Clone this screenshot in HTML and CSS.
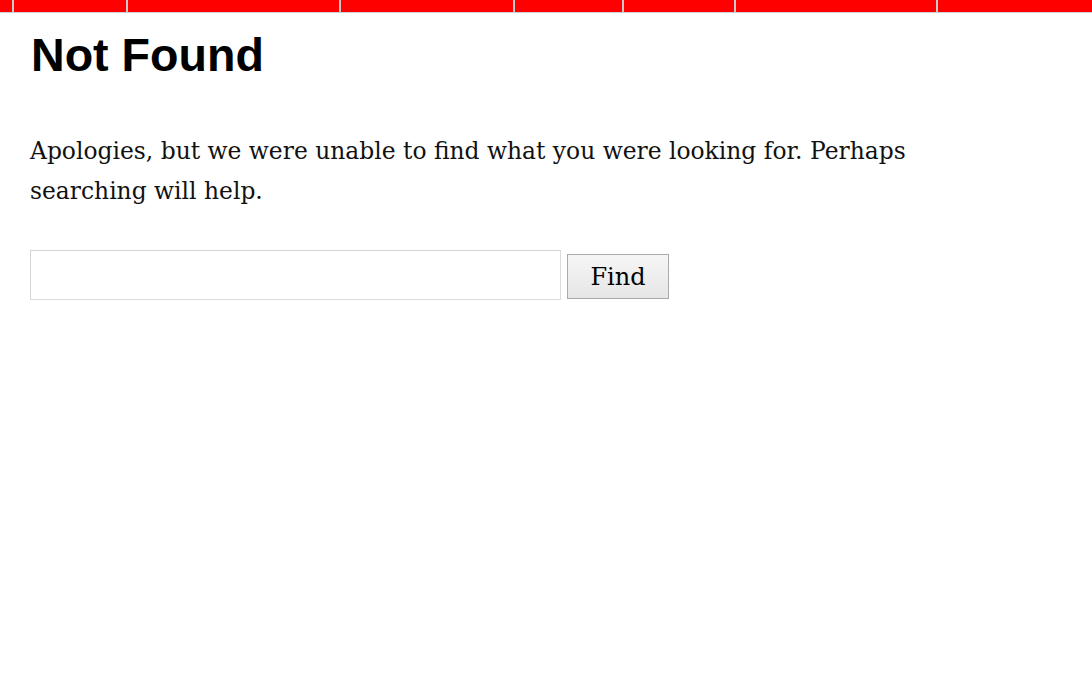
FILE: index.html
```html
<!DOCTYPE html>
<html>
<head>
<meta charset="utf-8">
<title>Not Found</title>
<link rel="stylesheet" href="styles.css">
</head>
<body>
<nav class="topnav">
  <span class="nav-item"></span>
  <span class="nav-item"></span>
  <span class="nav-item"></span>
  <span class="nav-item"></span>
  <span class="nav-item"></span>
  <span class="nav-item"></span>
  <span class="nav-item"></span>
  <span class="nav-item"></span>
</nav>
<main class="content">
  <h1 class="title">Not Found</h1>
  <p class="message">Apologies, but we were unable to find what you were looking for. Perhaps searching will help.</p>
  <form class="search" action="#">
    <input class="search-input" type="text" aria-label="Search">
    <button class="search-btn" type="button">Find</button>
  </form>
</main>
</body>
</html>
```

FILE: styles.css
```css
html, body {
  margin: 0;
  padding: 0;
  background: #fff;
}

.topnav {
  display: grid;
  grid-template-columns: 12px 112px 211px 172px 107px 110px 200px 1fr;
  column-gap: 2px;
  height: 12px;
  background: #c8c8c8;
  border-bottom: 1px solid #d0d0d0;
}

.nav-item {
  background: #ff0000;
}

.content {
  padding: 0 30px;
}

.title {
  margin: 14px 0 0 1px;
  font-family: "Liberation Sans", Arial, sans-serif;
  font-weight: bold;
  font-size: 46.6px;
  line-height: 56px;
  color: #000;
}

.message {
  margin: 48px 0 0 0;
  max-width: 940px;
  font-family: "DejaVu Serif", Georgia, serif;
  font-size: 23.4px;
  line-height: 40px;
  color: #111;
}

.search {
  display: flex;
  align-items: flex-start;
  gap: 6px;
  margin-top: 39px;
}

.search-input {
  width: 531px;
  height: 50px;
  box-sizing: border-box;
  border: 1px solid #dcdcdc;
  border-top-color: #d4d4d4;
  border-left-color: #d4d4d4;
  margin: 0;
  padding: 0 8px;
  font-size: 20px;
}

.search-btn {
  width: 102px;
  height: 45px;
  box-sizing: border-box;
  margin: 4px 0 0 0;
  border: 1px solid #aaa;
  background: linear-gradient(#f6f6f6, #e6e6e6);
  font-family: "DejaVu Serif", Georgia, serif;
  font-size: 24px;
  color: #000;
  padding: 0;
}
```
